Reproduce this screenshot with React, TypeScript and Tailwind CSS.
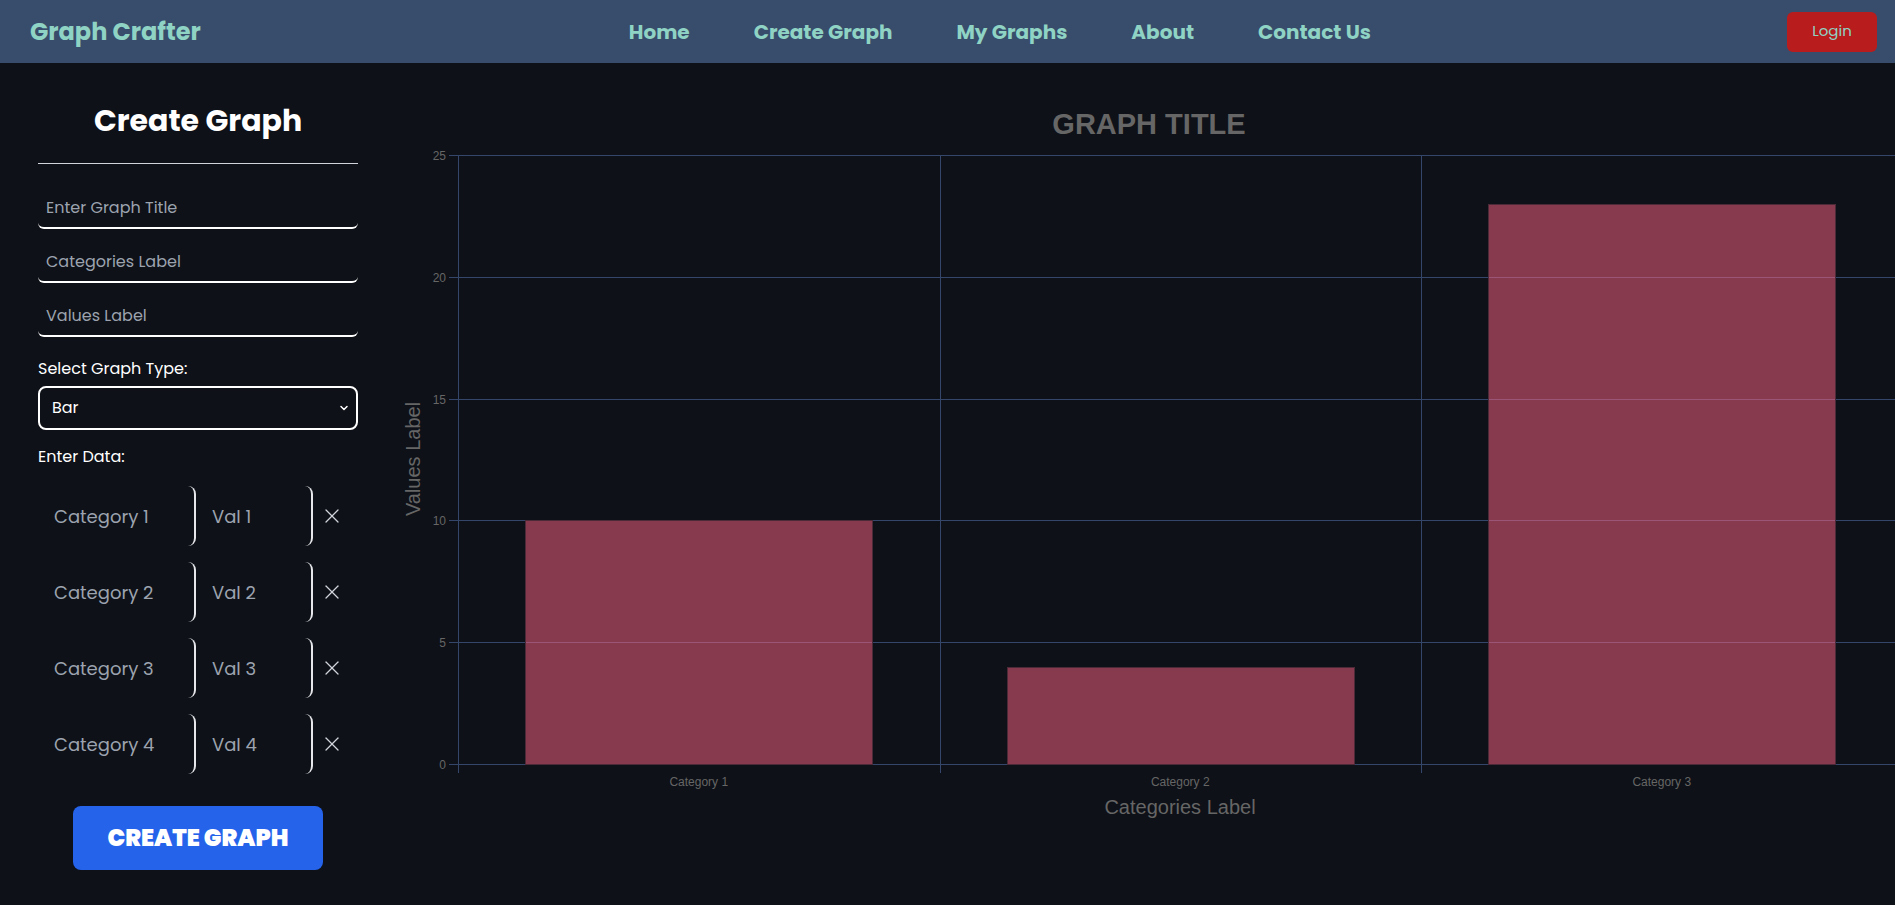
import { X, ChevronDown } from "lucide-react";

const data = [
  { label: "Category 1", value: 10 },
  { label: "Category 2", value: 4 },
  { label: "Category 3", value: 23 },
];

const rows = [
  { cat: "Category 1", val: "Val 1" },
  { cat: "Category 2", val: "Val 2" },
  { cat: "Category 3", val: "Val 3" },
  { cat: "Category 4", val: "Val 4" },
];

const navLinks = ["Home", "Create Graph", "My Graphs", "About", "Contact Us"];

// chart geometry (svg coords, origin at chart top-left)
const AXIS_X = 62;
const ZERO_Y = 701;
const UNIT = 24.36;
const CAT_W = 481.5;
const BAR_W = CAT_W * 0.72;

function BarChart() {
  const ticks = [0, 5, 10, 15, 20, 25];
  const topY = ZERO_Y - 25 * UNIT;
  return (
    <svg width={1506} height={780} className="block shrink-0">
      <text
        x={753}
        y={71}
        textAnchor="middle"
        fill="#666666"
        fontSize={29}
        fontWeight="bold"
        fontFamily="'Liberation Sans', Arial, sans-serif"
      >
        GRAPH TITLE
      </text>

      {ticks.map((t) => {
        const y = Math.round(ZERO_Y - t * UNIT) + 0.5;
        return (
          <g key={t}>
            <line x1={53} x2={1506} y1={y} y2={y} stroke="#34476a" strokeWidth={1} />
            <text
              x={50}
              y={y + 4}
              textAnchor="end"
              fill="#666666"
              fontSize={12}
              fontFamily="'Liberation Sans', Arial, sans-serif"
            >
              {t}
            </text>
          </g>
        );
      })}

      {[0, 1, 2, 3].map((i) => {
        const x = Math.round(AXIS_X + i * CAT_W) + 0.5;
        return (
          <line key={i} x1={x} x2={x} y1={topY} y2={ZERO_Y + 9} stroke="#34476a" strokeWidth={1} />
        );
      })}

      {data.map((d, i) => {
        const x = AXIS_X + i * CAT_W + (CAT_W - BAR_W) / 2;
        const h = d.value * UNIT;
        return (
          <g key={d.label}>
            <rect
              x={Math.round(x) + 0.5}
              y={Math.round(ZERO_Y - h) + 0.5}
              width={Math.round(BAR_W)}
              height={Math.round(h)}
              fill="rgba(255,99,132,0.5)"
              stroke="#4d2a38"
              strokeWidth={1}
            />
            <text
              x={AXIS_X + (i + 0.5) * CAT_W}
              y={723}
              textAnchor="middle"
              fill="#666666"
              fontSize={12}
              fontFamily="'Liberation Sans', Arial, sans-serif"
            >
              {d.label}
            </text>
          </g>
        );
      })}

      <text
        x={784}
        y={751}
        textAnchor="middle"
        fill="#666666"
        fontSize={20}
        fontFamily="'Liberation Sans', Arial, sans-serif"
      >
        Categories Label
      </text>
      <text
        x={24}
        y={396}
        textAnchor="middle"
        fill="#666666"
        fontSize={20}
        fontFamily="'Liberation Sans', Arial, sans-serif"
        transform="rotate(-90 24 396)"
      >
        Values Label
      </text>
    </svg>
  );
}

export default function App() {
  return (
    <div className="h-screen w-full overflow-hidden bg-[#0e1117] font-['Poppins','Inter',sans-serif]">
      <nav className="flex h-[63px] items-center justify-between bg-[#384c6b] pl-[30px] pr-[18px]">
        <span className="text-[24px] font-bold text-[#8fd3c4]">Graph Crafter</span>
        <ul className="flex items-center gap-16 pl-[12px]">
          {navLinks.map((l) => (
            <li key={l} className="text-[20px] font-bold text-[#8fd3c4]">
              {l}
            </li>
          ))}
        </ul>
        <button className="h-10 w-[90px] rounded-md bg-[#b91c1c] text-[15px] text-[#8fd3c4]">
          Login
        </button>
      </nav>

      <div className="flex">
        <aside className="w-[396px] shrink-0 px-[38px] pt-[40px]">
          <h1 className="text-center text-[30px] font-bold leading-9 text-white">Create Graph</h1>
          <div className="mt-[24px] h-px bg-[#d1d5db]" />

          <div className="mt-[23px] flex flex-col gap-[12px]">
            {["Enter Graph Title", "Categories Label", "Values Label"].map((p) => (
              <input
                key={p}
                placeholder={p}
                className="h-[42px] w-full rounded-md border-b-2 border-white bg-transparent px-2 text-[16px] text-white outline-none placeholder:text-[#9ca3af]"
              />
            ))}
          </div>

          <label className="mt-[21px] block text-[16px] leading-[22px] text-white">Select Graph Type:</label>
          <div className="relative mt-[6px]">
            <div className="flex h-[44px] w-full items-center rounded-lg border-2 border-white px-[12px] text-[16px] text-white">
              Bar
            </div>
            <ChevronDown className="absolute right-[8px] top-[16px] h-3 w-3 text-white" strokeWidth={3} />
          </div>

          <p className="mt-[16px] text-[16px] leading-[22px] text-white">Enter Data:</p>

          <div className="mt-[18px] flex flex-col gap-4">
            {rows.map((r) => (
              <div key={r.cat} className="flex items-center">
                <input
                  placeholder={r.cat}
                  className="h-[60px] w-[158px] rounded-lg border-r-2 border-[#e5e7eb] bg-transparent pl-4 text-[18px] text-white outline-none placeholder:text-[#9ca3af]"
                />
                <input
                  placeholder={r.val}
                  className="h-[60px] w-[117px] rounded-lg border-r-2 border-[#e5e7eb] bg-transparent pl-4 text-[18px] text-white outline-none placeholder:text-[#9ca3af]"
                />
                <X className="ml-[7px] h-6 w-6 text-[#d1d5db]" strokeWidth={1.3} />
              </div>
            ))}
          </div>

          <div className="mt-8 flex justify-center">
            <button className="h-16 w-[250px] rounded-lg bg-[#2563eb] text-[23.5px] font-black text-white">
              CREATE GRAPH
            </button>
          </div>
        </aside>

        <main className="shrink-0">
          <BarChart />
        </main>
      </div>
    </div>
  );
}
